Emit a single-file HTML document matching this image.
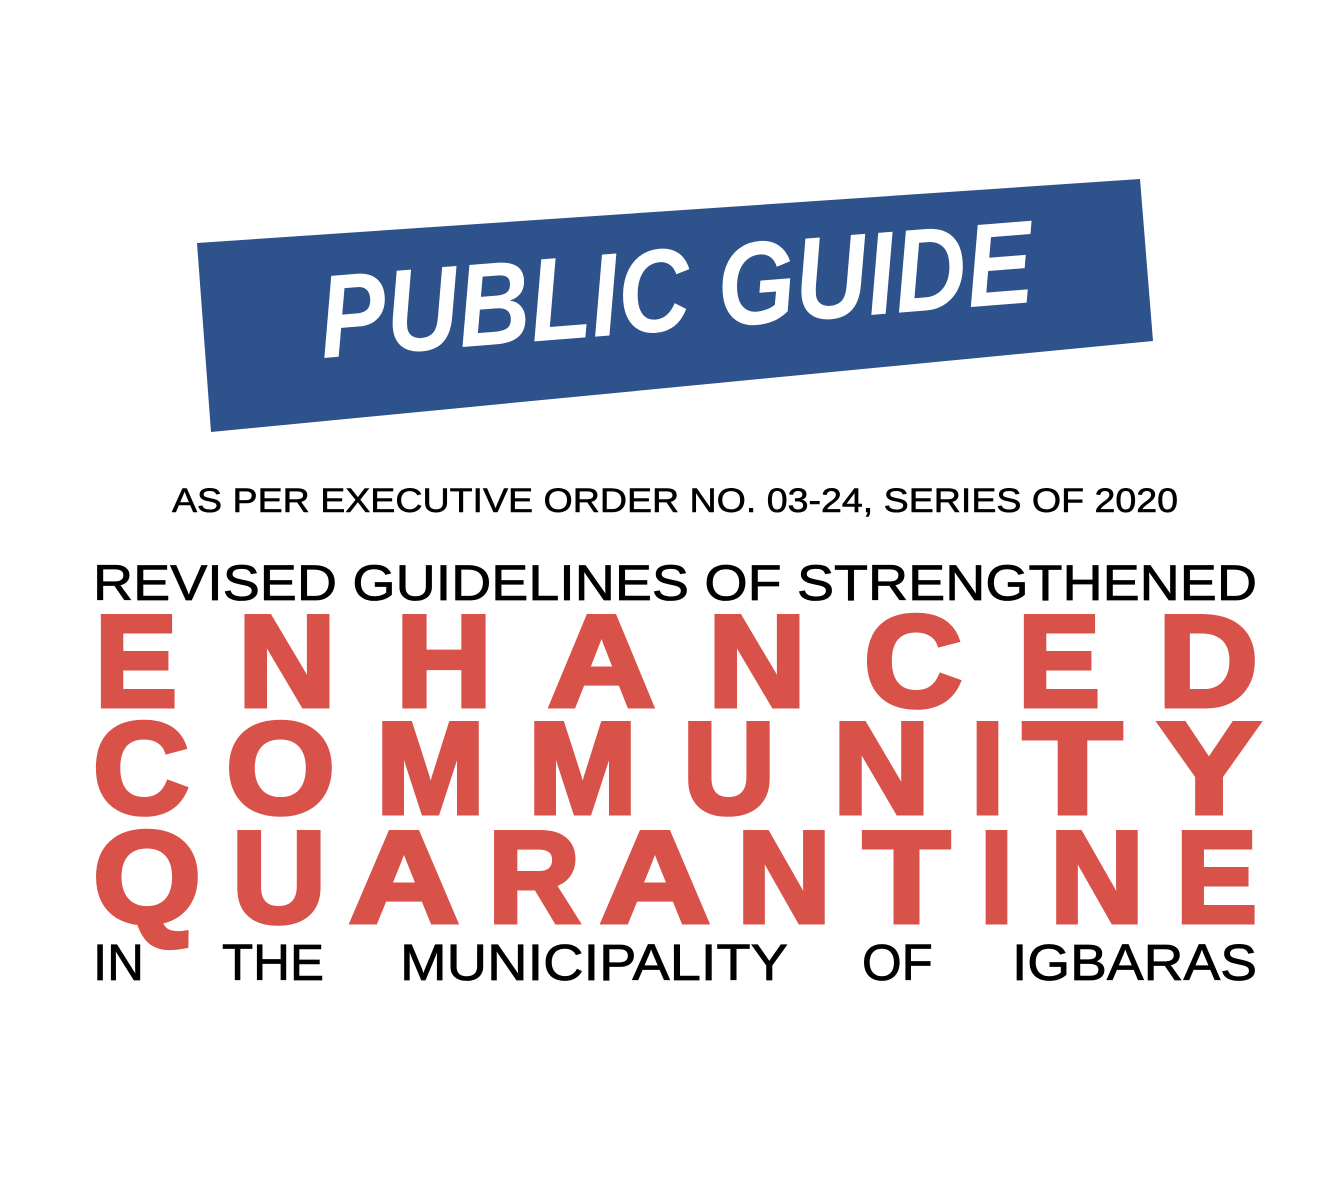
<!DOCTYPE html>
<html><head><meta charset="utf-8"><style>
html,body{margin:0;padding:0;background:#fff;width:1340px;height:1192px;overflow:hidden}
svg{display:block}
</style></head><body>
<svg width="1340" height="1192" viewBox="0 0 1340 1192" xmlns="http://www.w3.org/2000/svg">
<polygon points="197,243 1140,179 1153,341 211,432" fill="#2d528c"/>
<g transform="rotate(-4.5 677 285)">
<text x="318" y="330" font-family="Liberation Sans, sans-serif" font-weight="bold" font-style="italic" font-size="118" fill="#fff" textLength="715" lengthAdjust="spacingAndGlyphs">PUBLIC GUIDE</text>
</g>
<g font-family="Liberation Sans, sans-serif">
<text x="172" y="512" font-size="34" fill="#000" stroke="#000" stroke-width="0.6" textLength="1006" lengthAdjust="spacingAndGlyphs">AS PER EXECUTIVE ORDER NO. 03-24, SERIES OF 2020</text>
<text x="93" y="600" font-size="50" fill="#000" stroke="#000" stroke-width="0.8" textLength="1164" lengthAdjust="spacingAndGlyphs">REVISED  GUIDELINES  OF  STRENGTHENED</text>
<g font-weight="bold" font-size="130" fill="#d8524a" stroke="#d8524a" stroke-width="5" stroke-linejoin="miter">
<text y="706" x="95" textLength="82" lengthAdjust="spacingAndGlyphs">E</text>
<text y="706" x="238" textLength="98" lengthAdjust="spacingAndGlyphs">N</text>
<text y="706" x="396" textLength="96" lengthAdjust="spacingAndGlyphs">H</text>
<text y="706" x="548" textLength="107" lengthAdjust="spacingAndGlyphs">A</text>
<text y="706" x="708" textLength="98" lengthAdjust="spacingAndGlyphs">N</text>
<text y="706" x="864" textLength="98" lengthAdjust="spacingAndGlyphs">C</text>
<text y="706" x="1018" textLength="82" lengthAdjust="spacingAndGlyphs">E</text>
<text y="706" x="1158" textLength="100" lengthAdjust="spacingAndGlyphs">D</text>

<text y="813" x="93" textLength="96" lengthAdjust="spacingAndGlyphs">C</text>
<text y="813" x="226" textLength="109" lengthAdjust="spacingAndGlyphs">O</text>
<text y="813" x="376" textLength="109" lengthAdjust="spacingAndGlyphs">M</text>
<text y="813" x="528" textLength="109" lengthAdjust="spacingAndGlyphs">M</text>
<text y="813" x="683" textLength="92" lengthAdjust="spacingAndGlyphs">U</text>
<text y="813" x="833" textLength="97" lengthAdjust="spacingAndGlyphs">N</text>
<text y="813" x="971" textLength="33" lengthAdjust="spacingAndGlyphs">I</text>
<text y="813" x="1023" textLength="99" lengthAdjust="spacingAndGlyphs">T</text>
<text y="813" x="1158" textLength="102" lengthAdjust="spacingAndGlyphs">Y</text>

<text y="922" x="93" textLength="108" lengthAdjust="spacingAndGlyphs">Q</text>
<text y="922" x="232" textLength="94" lengthAdjust="spacingAndGlyphs">U</text>
<text y="922" x="349" textLength="110" lengthAdjust="spacingAndGlyphs">A</text>
<text y="922" x="488" textLength="92" lengthAdjust="spacingAndGlyphs">R</text>
<text y="922" x="600" textLength="110" lengthAdjust="spacingAndGlyphs">A</text>
<text y="922" x="737" textLength="94" lengthAdjust="spacingAndGlyphs">N</text>
<text y="922" x="863" textLength="87" lengthAdjust="spacingAndGlyphs">T</text>
<text y="922" x="980" textLength="33" lengthAdjust="spacingAndGlyphs">I</text>
<text y="922" x="1050" textLength="94" lengthAdjust="spacingAndGlyphs">N</text>
<text y="922" x="1176" textLength="81" lengthAdjust="spacingAndGlyphs">E</text>
</g>
<g font-size="51" fill="#000" stroke="#000" stroke-width="0.8">
<text x="93" y="980">IN</text>
<text x="222" y="980">THE</text>
<text x="400" y="980" textLength="388" lengthAdjust="spacingAndGlyphs">MUNICIPALITY</text>
<text x="862" y="980">OF</text>
<text x="1012" y="980" textLength="245" lengthAdjust="spacingAndGlyphs">IGBARAS</text>
</g>
</g>
</svg>
</body></html>
